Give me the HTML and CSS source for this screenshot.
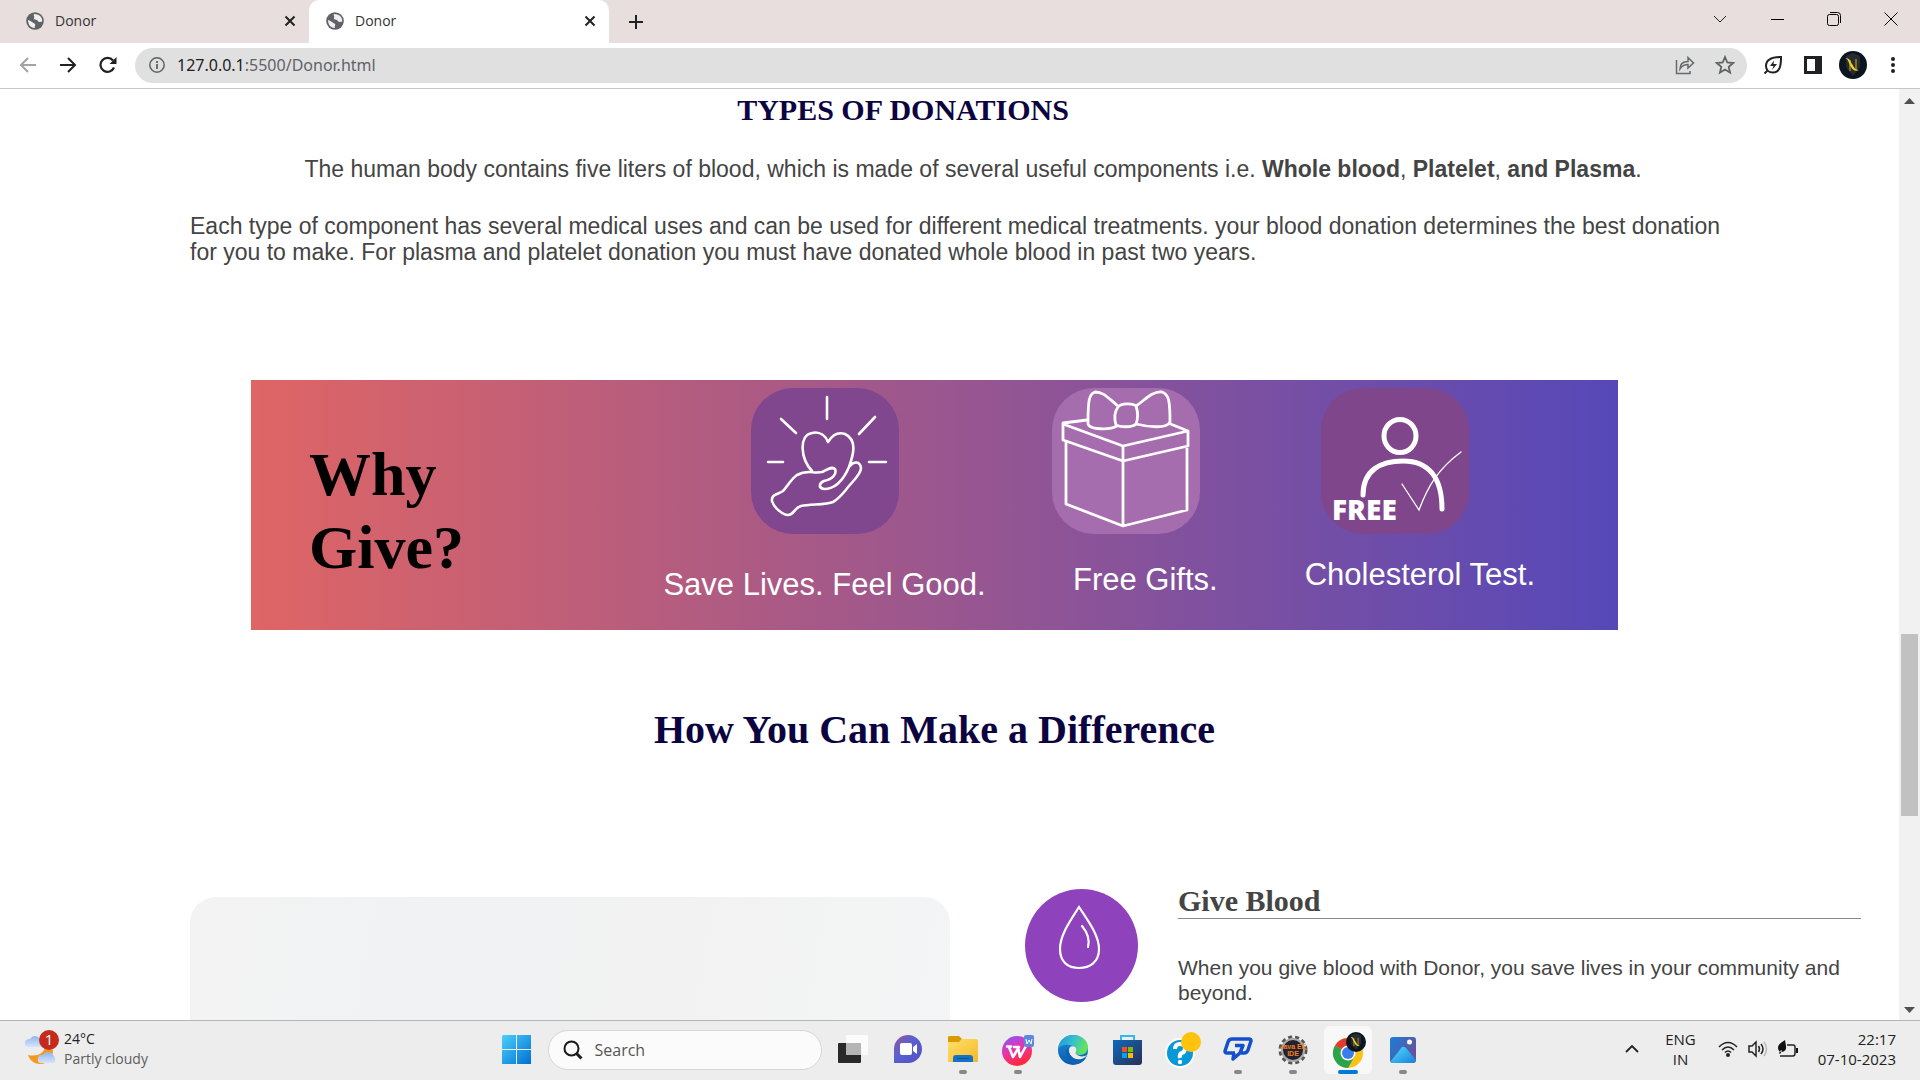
FILE: index.html
```html
<!DOCTYPE html>
<html lang="en">
<head>
<meta charset="utf-8">
<title>Donor</title>
<link rel="stylesheet" href="styles.css">
</head>
<body>
<svg class="defs" width="0" height="0" aria-hidden="true">
  <defs>
    <linearGradient id="win" x1="0" y1="0" x2="1" y2="1"><stop offset="0" stop-color="#4cd0fb"/><stop offset="1" stop-color="#0070d2"/></linearGradient>
    <linearGradient id="chat" x1="0" y1="0" x2="1" y2="1"><stop offset="0" stop-color="#93589f"/><stop offset=".45" stop-color="#5b5fd0"/><stop offset="1" stop-color="#5050c0"/></linearGradient>
    <linearGradient id="folder" x1="0" y1="0" x2="1" y2="1"><stop offset="0" stop-color="#ffe06a"/><stop offset="1" stop-color="#f6b92b"/></linearGradient>
    <linearGradient id="wps" x1="0" y1="0" x2=".4" y2="1"><stop offset="0" stop-color="#7b5cff"/><stop offset=".5" stop-color="#e634b4"/><stop offset="1" stop-color="#ff2a3c"/></linearGradient>
    <linearGradient id="edgeTop" x1="0" y1="0" x2="1" y2=".3"><stop offset="0" stop-color="#1f94d8"/><stop offset=".55" stop-color="#35c0d0"/><stop offset="1" stop-color="#62e35b"/></linearGradient>
    <linearGradient id="edgeLow" x1="0" y1="0" x2="0" y2="1"><stop offset="0" stop-color="#1b8fdd"/><stop offset="1" stop-color="#0b5bab"/></linearGradient>
    <linearGradient id="store" x1="0" y1="0" x2="1" y2="1"><stop offset="0" stop-color="#0f69bd"/><stop offset="1" stop-color="#2a2f54"/></linearGradient>
    <linearGradient id="photo" x1="0" y1="0" x2="1" y2=".6"><stop offset="0" stop-color="#1580d8"/><stop offset="1" stop-color="#6a4f9c"/></linearGradient>
    <linearGradient id="hill" x1="0" y1="0" x2="1" y2="1"><stop offset="0" stop-color="#55dcff"/><stop offset="1" stop-color="#1580da"/></linearGradient>
    <linearGradient id="cloud" x1="0" y1="0" x2="0" y2="1"><stop offset="0" stop-color="#8fb4ee"/><stop offset="1" stop-color="#d6e5fb"/></linearGradient>
    <symbol id="globe" viewBox="0 0 18 18"><circle cx="9" cy="9" r="8.8" fill="#5f6368"/><path d="M2 8c2 1 3 1 4 2s2 1 3 2-1 2 0 4c-4 0-7-3-7-8zM8 2c-1 2 1 2 0 4s3 1 4 3 3 0 4 1c1-4-2-8-8-8z" fill="#f3eeee"/></symbol>
    <symbol id="cross" viewBox="0 0 12 12"><path d="M1.5 1.5l9 9m0-9l-9 9" stroke="#202124" stroke-width="2" fill="none"/></symbol>
    <symbol id="monogram" viewBox="0 0 28 28"><circle cx="14" cy="14" r="14" fill="#0b1520"/><path d="M7 5l7-3 7 3v11l-7 9-7-9z" fill="#272b31"/><path d="M11 20V9M17 19V8" stroke="#9a8526" stroke-width="1.5"/><path d="M6 7c5 0 5 3 7 6s3 6 7 6c-5 2-7-1-9-5S9 8 6 7z" fill="#f0cf2c"/></symbol>
  </defs>
</svg>
<div class="screen">
  <header class="tabbar">
    <div class="tab"><svg class="favicon"><use href="#globe"/></svg><span>Donor</span><button class="tab-close" aria-label="Close tab"><svg><use href="#cross"/></svg></button></div>
    <div class="tab tab-active"><svg class="favicon"><use href="#globe"/></svg><span>Donor</span><button class="tab-close" aria-label="Close tab"><svg><use href="#cross"/></svg></button></div>
    <button class="new-tab" aria-label="New tab"><svg width="16" height="16" viewBox="0 0 16 16"><path d="M8 1v14M1 8h14" stroke="#202124" stroke-width="2"/></svg></button>
    <div class="window-controls">
      <button aria-label="Search tabs"><svg width="14" height="14" viewBox="0 0 14 14"><path d="M1 4l6 6 6-6" fill="none" stroke="#222"/></svg></button>
      <button aria-label="Minimise"><svg width="14" height="14" viewBox="0 0 14 14"><path d="M1 7.500h13" stroke="#000"/></svg></button>
      <button aria-label="Restore"><svg width="14" height="14" viewBox="0 0 14 14"><path d="M3 .5h7.500q3 0 3 3V11" fill="none" stroke="#000"/><rect x=".5" y="2.500" width="11" height="11" rx="2" fill="none" stroke="#000"/></svg></button>
      <button aria-label="Close"><svg width="14" height="14" viewBox="0 0 14 14"><path d="M.5.500l13 13m0-13l-13 13" stroke="#000"/></svg></button>
    </div>
  </header>
  <nav class="toolbar">
    <button class="nav-button" aria-label="Back"><svg width="18" height="18" viewBox="0 0 18 18"><path d="M17 9H2m7-7L2 9l7 7" fill="none" stroke="#a3a3a5" stroke-width="2"/></svg></button>
    <button class="nav-button" aria-label="Forward"><svg width="18" height="18" viewBox="0 0 18 18"><path d="M1 9h15M9 2l7 7-7 7" fill="none" stroke="#202124" stroke-width="2"/></svg></button>
    <button class="nav-button" aria-label="Reload"><svg width="18" height="18" viewBox="0 0 18 18"><path d="M15 11.500A7 7 0 1 1 14 4.500" fill="none" stroke="#202124" stroke-width="2.200"/><path d="M17.500 1v7h-7z" fill="#202124"/></svg></button>
    <div class="address">
      <svg width="16" height="16" viewBox="0 0 16 16"><circle cx="8" cy="8" r="7.200" fill="none" stroke="#5f6368" stroke-width="1.500"/><path d="M8 7v5M8 4v2" stroke="#5f6368" stroke-width="1.800"/></svg>
      <div class="url" role="textbox" aria-label="Address" contenteditable="true" spellcheck="false"><span class="host">127.0.0.1</span>:5500/Donor.html</div>
      <button aria-label="Share"><svg width="20" height="20" viewBox="0 0 20 20"><path d="M1.500 5v13.500H15V16M5 14c0-5 3-7.500 8-7.500V2.500l5.500 5.500-5.500 5V9.500c-4 0-6 1-8 4.500z" fill="none" stroke="#66696d" stroke-width="1.500"/></svg></button>
      <button aria-label="Bookmark"><svg width="20" height="20" viewBox="0 0 20 20"><path d="M10 2l2.300 5.500 5.900.5-4.500 3.900 1.400 5.800-5.100-3.100-5.100 3.100 1.400-5.800L1.800 8l5.900-.5z" fill="none" stroke="#5f6368" stroke-width="1.800"/></svg></button>
    </div>
    <button class="ext" aria-label="Energy saver"><svg width="20" height="20" viewBox="0 0 20 20"><path d="M18 2C9 2 3 4 3 11c0 4 3 6.500 7 6.500 7 0 8-7 8-15.500zM1.500 18.500L5 15" fill="none" stroke="#202124" stroke-width="2"/><path d="M11 5.500L7 11h3.500L9 15l5-6h-3.500z" fill="#202124"/></svg></button>
    <button class="ext" aria-label="Side panel"><svg width="18" height="18" viewBox="0 0 18 18"><path d="M0 0h18v18H0zm3 3v12h8V3z" fill="#202124" fill-rule="evenodd"/></svg></button>
    <button class="ext" aria-label="Profile"><svg width="28" height="28"><use href="#monogram"/></svg></button>
    <button class="ext" aria-label="Menu"><svg width="6" height="18" viewBox="0 0 6 18"><g fill="#202124"><circle cx="3" cy="3" r="2"/><circle cx="3" cy="9" r="2"/><circle cx="3" cy="15" r="2"/></g></svg></button>
  </nav>
  <div class="viewport">
    <main class="page">
      <h2 class="types-title">TYPES OF DONATIONS</h2>
      <p class="lead">The human body contains five liters of blood, which is made of several useful components i.e. <b>Whole blood</b>, <b>Platelet</b>, <b>and Plasma</b>.</p>
      <p class="copy">Each type of component has several medical uses and can be used for different medical treatments. your blood donation determines the best donation for you to make. For plasma and platelet donation you must have donated whole blood in past two years.</p>
      <section class="banner">
        <h2 class="why">Why Give?</h2>
        <figure class="reason reason-lives">
          <svg class="tile" viewBox="0 0 148 146"><g fill="none" stroke="#fff" stroke-width="2.600" stroke-linecap="round" stroke-linejoin="round"><path d="M76 9v22M30 31l15 14M124 29l-16 17M17 74h15M118 74h17"/><path d="M61 83C49 70 48 47 61 45C70 43 75 49 77 54C82 46 88 44 94 46C107 52 102 68 98 79C92 93 84 101 73 101C67 100 68 95 73 93C82 91 86 86 84 81C80 78 76 82 71 84C62 86 57 81 46 87C40 91 36 99 32 103C28 106 20 106 21 113C23 120 32 127 37 127C43 127 43 120 50 118C60 116 75 117 82 114C89 110 93 104 98 98C103 92 110 86 110 80C109 73 103 73 99 78"/></g></svg>
          <figcaption>Save Lives. Feel Good.</figcaption>
        </figure>
        <figure class="reason reason-gifts">
          <svg class="tile" viewBox="0 0 148 146"><g fill="none" stroke="#fff" stroke-width="2.800" stroke-linejoin="round"><path d="M35 32L11 35v17l60 21 65-15V43l-20-8M11 36l60 22 65-15M71 58v80M14 53v63l57 22 64-16V60"/><path d="M66 18C56 10 52 4 43 4C37 6 36 12 36 36C38 42 58 42 65 38M84 18C93 12 100 3 110 4C117 6 118 14 118 34C115 41 96 39 84 36"/><path d="M66 19C69 15 81 15 84 18C86 24 86 31 84 36C80 40 68 39 64 37C62 30 63 23 66 19z"/></g></svg>
          <figcaption>Free Gifts.</figcaption>
        </figure>
        <figure class="reason reason-test">
          <svg class="tile" viewBox="0 0 148 146"><g fill="none" stroke="#fff" stroke-width="5" stroke-linecap="round"><ellipse cx="79" cy="48" rx="16" ry="16.500"/><path d="M42 107C42 82 60 73 82 73C108 73 121 90 121 121"/><path d="M81 96l17 26C107 98 117 81 140 64" stroke-width="1.300"/></g><text class="free" x="11" y="132">FREE</text></svg>
          <figcaption>Cholesterol Test.</figcaption>
        </figure>
      </section>
      <h1 class="difference">How You Can Make a Difference</h1>
      <section class="ways">
        <div class="photo"></div>
        <svg class="drop" viewBox="0 0 113 113"><circle cx="56.500" cy="56.500" r="56.500" fill="#8e42bb"/><path d="M54 18C45 32 35 46 35 60C35 73 43 79 54 79S74 73 74 60C74 46 63 32 54 18zM57 37c5 6 8 13 6 21" fill="none" stroke="#fff" stroke-width="2.200" stroke-linecap="round"/></svg>
        <article class="way">
          <h3>Give Blood</h3>
          <p>When you give blood with Donor, you save lives in your community and beyond.</p>
        </article>
      </section>
    </main>
    <div class="scrollbar"><svg width="11" height="6" viewBox="0 0 11 6"><path d="M5.500 0L11 6H0z" fill="#505050"/></svg><div class="track"><div class="thumb"></div></div><svg width="11" height="6" viewBox="0 0 11 6"><path d="M5.500 6L11 0H0z" fill="#505050"/></svg></div>
  </div>
  <footer class="taskbar">
    <div class="weather">
      <svg width="36" height="38" viewBox="0 0 36 38"><path d="M3 18q-3 0-3-4t5-4q3-5 8-2t4 10z" fill="url(#cloud)"/><path d="M3 26c10 2 15-2 17-7l8 2c0 8-5 14-13 14-5 0-10-3-12-9z" fill="#f29a1f"/><path d="M15 34q-3-1-2-5t5-3q3-5 8-2t4 10z" fill="url(#cloud)"/><circle cx="24" cy="11" r="10" fill="#c42b1c"/><text class="badge" x="24" y="16">1</text></svg>
      <p><span class="temp">24°C</span><span class="sky">Partly cloudy</span></p>
    </div>
    <div class="dock">
      <button aria-label="Start"><svg width="30" height="30" viewBox="0 0 30 30"><path d="M1 0h13v14H0V1zM15 0h14v14H15zM0 15h14v14H0zM15 15h14v14H15z" fill="url(#win)"/></svg></button>
      <label class="search"><svg width="20" height="20" viewBox="0 0 20 20"><circle cx="8.500" cy="8.500" r="7" fill="none" stroke="#1b1b1b" stroke-width="2"/><path d="M13.500 13.500l5 5" stroke="#1b1b1b" stroke-width="3"/></svg><input type="text" placeholder="Search" aria-label="Search"></label>
      <button aria-label="Task view"><svg width="30" height="30" viewBox="0 0 30 30"><rect y="8" width="23" height="20" rx="1" fill="#292929"/><rect x="8" width="22" height="20" rx="1" fill="#fbfbfb"/><path d="M8 8h15v12H8z" fill="#b5b5b5"/></svg></button>
      <button aria-label="Chat"><svg width="30" height="30" viewBox="0 0 30 30"><path d="M1 28V15A14 14 0 1 1 15 28z" fill="url(#chat)"/><rect x="7" y="8" width="12" height="12" rx="2" fill="#fff"/><path d="M20 12l4-3v10l-4-3z" fill="#fff"/></svg></button>
      <button class="running" aria-label="File Explorer"><svg width="30" height="30" viewBox="0 0 30 30"><path d="M0 2q0-1 2-1h9l3 3-3 4H0z" fill="#dc9a05"/><path d="M0 7h11l3-3h14q2 0 2 2v21H0z" fill="url(#folder)"/><path d="M5 27v-4q0-3 3-3h14q3 0 3 3v4z" fill="#1572c4"/><path d="M9 23.500h12" stroke="#0b4f94"/></svg></button>
      <button class="running" aria-label="WPS Office"><svg width="32" height="32" viewBox="0 0 32 32"><circle cx="15" cy="17" r="15" fill="url(#wps)"/><path d="M5 12.500h4M7 13l4 10 6-10h-5M16 13l2 10 6-11" fill="none" stroke="#fff" stroke-width="2.600" stroke-linejoin="round" stroke-linecap="round"/><rect x="22" y="1" width="10" height="12" rx="2" fill="#5a8ae0"/><path d="M24 5l1 5 2-4 2 4 1-5" fill="none" stroke="#fff"/></svg></button>
      <button aria-label="Edge"><svg width="30" height="30" viewBox="0 0 30 30"><circle cx="15" cy="15" r="15" fill="url(#edgeLow)"/><path d="M0 14C1 5 8 0 15 0c9 0 15 6 15 12 0 5-4 8-8 8-3 0-5-1-4-4 0-4-4-6-8-6-4-1-8 1-10 4z" fill="url(#edgeTop)"/><path d="M11 15c0-4 4-5 7-2 1 3-1 4 0 6 3 3 8 3 11 1-3 5-12 6-15 3-2-2-3-5-3-8z" fill="#ededed"/><path d="M10 12c-5 7 0 18 9 17 4-1 7-3 9-6-8 4-18 0-18-11z" fill="#1062b4"/></svg></button>
      <button aria-label="Microsoft Store"><svg width="30" height="30" viewBox="0 0 30 30"><path d="M8 6V1h13v5" fill="none" stroke="#35b8ef" stroke-width="2"/><path d="M0 5h29v22q0 3-3 3H3q-3 0-3-3z" fill="url(#store)"/><path d="M9 12h5v5H9z" fill="#f25022"/><path d="M15 12h5v5h-5z" fill="#7fba00"/><path d="M9 18h5v5H9z" fill="#00a4ef"/><path d="M15 18h5v5h-5z" fill="#ffb900"/></svg></button>
      <button aria-label="Get Help"><svg width="36" height="36" viewBox="0 0 36 36"><circle cx="15" cy="21" r="14" fill="#0798d8" stroke="#fff" stroke-width="2"/><path d="M10 17q0-5 5-5t5 4-3 5-2 5" fill="none" stroke="#fff" stroke-width="4"/><circle cx="15" cy="30" r="2.200" fill="#fff"/><circle cx="26" cy="10" r="10" fill="#ffc20e"/></svg></button>
      <button class="running" aria-label="Messenger"><svg width="30" height="26" viewBox="0 0 30 26"><path d="M12 16H4q-2 0-2-2l3-9q1-3 4-3h17q2 0 2 2l-3 9q-1 3-4 3h-3M12 8.500h8L17 16l-7 6 1-6" fill="none" stroke="#1450cc" stroke-width="3.500" stroke-linejoin="round"/></svg></button>
      <button class="running" aria-label="Eclipse Java EE IDE"><svg width="30" height="30" viewBox="0 0 30 30"><circle cx="15" cy="15" r="13" fill="none" stroke="#555" stroke-width="3" stroke-dasharray="4 3"/><circle cx="15" cy="15" r="11" fill="#24202f" stroke="#aaa" stroke-width="2"/><text class="ide" x="15" y="14">Java EE</text><text class="ide" x="15" y="21">IDE</text></svg></button>
      <button class="running current" aria-label="Chrome"><svg width="36" height="38" viewBox="0 0 36 38"><circle cx="18" cy="22" r="15" fill="#fbc116"/><path d="M18 22L5 14.500A15 15 0 0 1 31 14.500H18z" fill="#e23a2e"/><path d="M5 14.500A15 15 0 0 0 18 37l6.500-11.500L18 22z" fill="#2ba24c"/><circle cx="18" cy="22" r="7.500" fill="#fff"/><circle cx="18" cy="22" r="6" fill="#3c7dee"/><svg x="16" y="1" width="20" height="20"><use href="#monogram"/></svg></svg></button>
      <button class="running" aria-label="Photos"><svg width="26" height="26" viewBox="0 0 26 26"><rect width="26" height="26" rx="3" fill="url(#photo)"/><path d="M1 24l11-14q2-1 4 1l10 12q-1 3-3 3H3q-2 0-2-2z" fill="url(#hill)"/><circle cx="19.500" cy="5" r="2.500" fill="#fff"/></svg></button>
    </div>
    <div class="tray">
      <button aria-label="Hidden icons"><svg width="14" height="8" viewBox="0 0 14 8"><path d="M1 7l6-6 6 6" fill="none" stroke="#222" stroke-width="1.800"/></svg></button>
      <p class="language">ENG<br>IN</p>
      <div class="status">
      <svg width="20" height="16" viewBox="0 0 20 16"><g fill="none" stroke="#222" stroke-width="1.600"><path d="M1 6q9-9 18 0M4 9q6-6 12 0M7 11.500q3-3 6 0"/></g><circle cx="10" cy="14" r="2" fill="#222"/></svg>
      <svg width="20" height="18" viewBox="0 0 20 18"><g fill="none" stroke="#222" stroke-width="1.500"><path d="M1 6h3l4-4v14l-4-4H1zM10.500 6q2 3 0 6M13 4q4 5 0 10"/><path d="M16 2q5 7 0 14" stroke="#bbb"/></g></svg>
      <svg width="20" height="18" viewBox="0 0 20 18"><path d="M9 5h6q2 0 2 2v6q0 3-2 3H2" fill="none" stroke="#222" stroke-width="1.500"/><path d="M18 8h2v5h-2zM7 0C3 3 0 4 0 8q0 4 4 4 5-1 4-6zM1 13l2-3 1 1-2 3z" fill="#111"/></svg>
      </div>
      <p class="clock">22:17<br>07-10-2023</p>
    </div>
  </footer>
</div>
</body>
</html>
```
FILE: styles.css
```css
* { box-sizing: border-box; }
body { margin: 0; background: #fff; font-family: "Liberation Sans", Arial, sans-serif; color: #444; }
h1, h2, h3, p, figure { margin: 0; }
button { display: flex; align-items: center; justify-content: center; padding: 0; border: 0; background: none; }
svg { display: block; flex: none; }
.defs { position: absolute; }
.screen { display: flex; flex-direction: column; height: 100vh; }

.tabbar { display: flex; flex: none; height: 43px; padding-left: 9px; background: #e8dedd; font: 14px "Open Sans", sans-serif; color: #333; }
.tab { display: flex; align-items: center; gap: 11px; width: 300px; padding: 0 11px 2px 17px; }
.tab-active { background: #fff; border-radius: 10px 10px 0 0; }
.favicon { width: 18px; height: 18px; }
.tab-close { width: 16px; height: 24px; margin-left: auto; }
.tab-close svg { width: 12px; height: 12px; }
.new-tab { width: 54px; }
.window-controls { display: flex; margin-left: auto; padding-right: 1px; }
.window-controls button { width: 57px; height: 38px; }

.toolbar { display: flex; flex: none; align-items: center; height: 46px; padding: 0 13px 1px 8px; border-bottom: 1px solid #c6c6c8; }
.nav-button { width: 40px; height: 36px; }
.address { display: flex; flex: 1; align-items: center; gap: 12px; height: 35px; margin-left: 7px; padding: 0 8px 0 14px; border-radius: 18px; background: #e0e0e0; }
.address button { width: 28px; height: 28px; }
.url { flex: 1; min-width: 0; font: 16px "Noto Sans", sans-serif; color: #5f6368; }
.host { color: #202124; }
.ext { width: 28px; height: 28px; margin-left: 12px; }

.viewport { display: flex; flex: 1; min-height: 0; }
.page { flex: 1; min-width: 0; overflow: hidden; }
.types-title { margin: 3px 93px 0 0; font: bold 30px/36px "Liberation Serif", serif; text-align: center; color: #0c0440; }
.lead { margin: 28px 0 0 47px; font-size: 23px; line-height: 26px; text-align: center; }
.copy { margin: 31px 160px 0 190px; font-size: 23px; line-height: 26px; }
.banner { display: flex; align-items: flex-start; height: 250px; margin: 115px 281px 0 251px; padding: 8px 83px 0 58px; background: linear-gradient(90deg, #df6565, #5648b8); color: #fff; }
.why { width: 180px; margin: 50px auto 0 0; font: bold 62px/73px "Liberation Serif", serif; color: #000; }
.reason { display: flex; flex-direction: column; font-size: 31px; line-height: 36px; white-space: nowrap; }
.tile { width: 148px; height: 146px; border-radius: 42px; }
.reason-lives { align-items: center; gap: 33px; }
.reason-lives .tile { background: #80468e; }
.reason-gifts { gap: 28px; width: 166px; margin: 0 87px 0 66px; }
.reason-gifts .tile { background: #a66dae; }
.reason-gifts figcaption { text-align: right; }
.reason-test { gap: 23px; }
.reason-test .tile { margin-left: 16px; background: #80468b; }
.free { font: 800 28px "Open Sans", sans-serif; fill: #fff; }
.difference { margin: 77px 30px 0 0; font: bold 40px/46px "Liberation Serif", serif; text-align: center; color: #0c0440; }
.ways { display: flex; align-items: flex-start; margin: 136px 38px 0 190px; }
.photo { flex: 1; height: 400px; margin-top: 8px; border-radius: 26px; background: linear-gradient(100deg, #f3f3f3, #f1f2f4 30%, #f2f2f2 60%, #f4f5f6); }
.drop { width: 113px; height: 113px; margin: 0 40px 0 75px; }
.way { width: 683px; }
.way h3 { padding-bottom: 5px; border-bottom: 1px solid #888; font: bold 30px/24px "Liberation Serif", serif; }
.way p { margin-top: 36px; font-size: 21px; line-height: 25px; }

.scrollbar { display: flex; flex-direction: column; align-items: center; width: 21px; padding: 9px 0 7px; background: #f1f1f1; }
.track { flex: 1; padding-top: 530px; }
.thumb { width: 17px; height: 182px; background: #c1c1c1; }

.taskbar { display: flex; flex: none; align-items: center; height: 60px; padding: 0 24px 0 25px; border-top: 1px solid #b5b5b5; background: #ededed; font: 15px/20px "Open Sans", sans-serif; color: #222; }
.weather { display: flex; flex: 1; gap: 3px; padding-bottom: 4px; font-size: 14px; }
.weather p { display: flex; flex-direction: column; }
.sky { color: #5d5d5d; }
.badge { font: 15px "Open Sans", sans-serif; fill: #fff; text-anchor: middle; }
.dock { display: flex; align-items: center; gap: 7px; padding: 0 2px 1px 0; }
.dock button { position: relative; width: 48px; height: 48px; border-radius: 6px; }
.dock .current { background: #f8f8f8; }
.running::after { content: ""; position: absolute; bottom: 0; left: 20px; width: 8px; height: 4px; border-radius: 2px; background: #878787; }
.current::after { left: 14px; width: 20px; background: #0078d4; }
.search { display: flex; align-items: center; gap: 12px; width: 274px; height: 40px; padding-left: 14px; border: 1px solid #d6d6d6; border-radius: 20px; background: #fbfbfb; }
.search input { width: 200px; padding: 0; border: 0; background: none; font: 16px "Open Sans", sans-serif; }
.search input::placeholder { color: #555; }
.ide { font: bold 7px "Liberation Sans", sans-serif; fill: #f08020; text-anchor: middle; }
.tray { display: flex; flex: 1; align-items: center; justify-content: flex-end; gap: 26px; padding-bottom: 3px; }
.status { display: flex; align-items: center; gap: 10px; margin-left: -4px; }
.language { text-align: center; }
.clock { margin-left: -6px; text-align: right; }
```
